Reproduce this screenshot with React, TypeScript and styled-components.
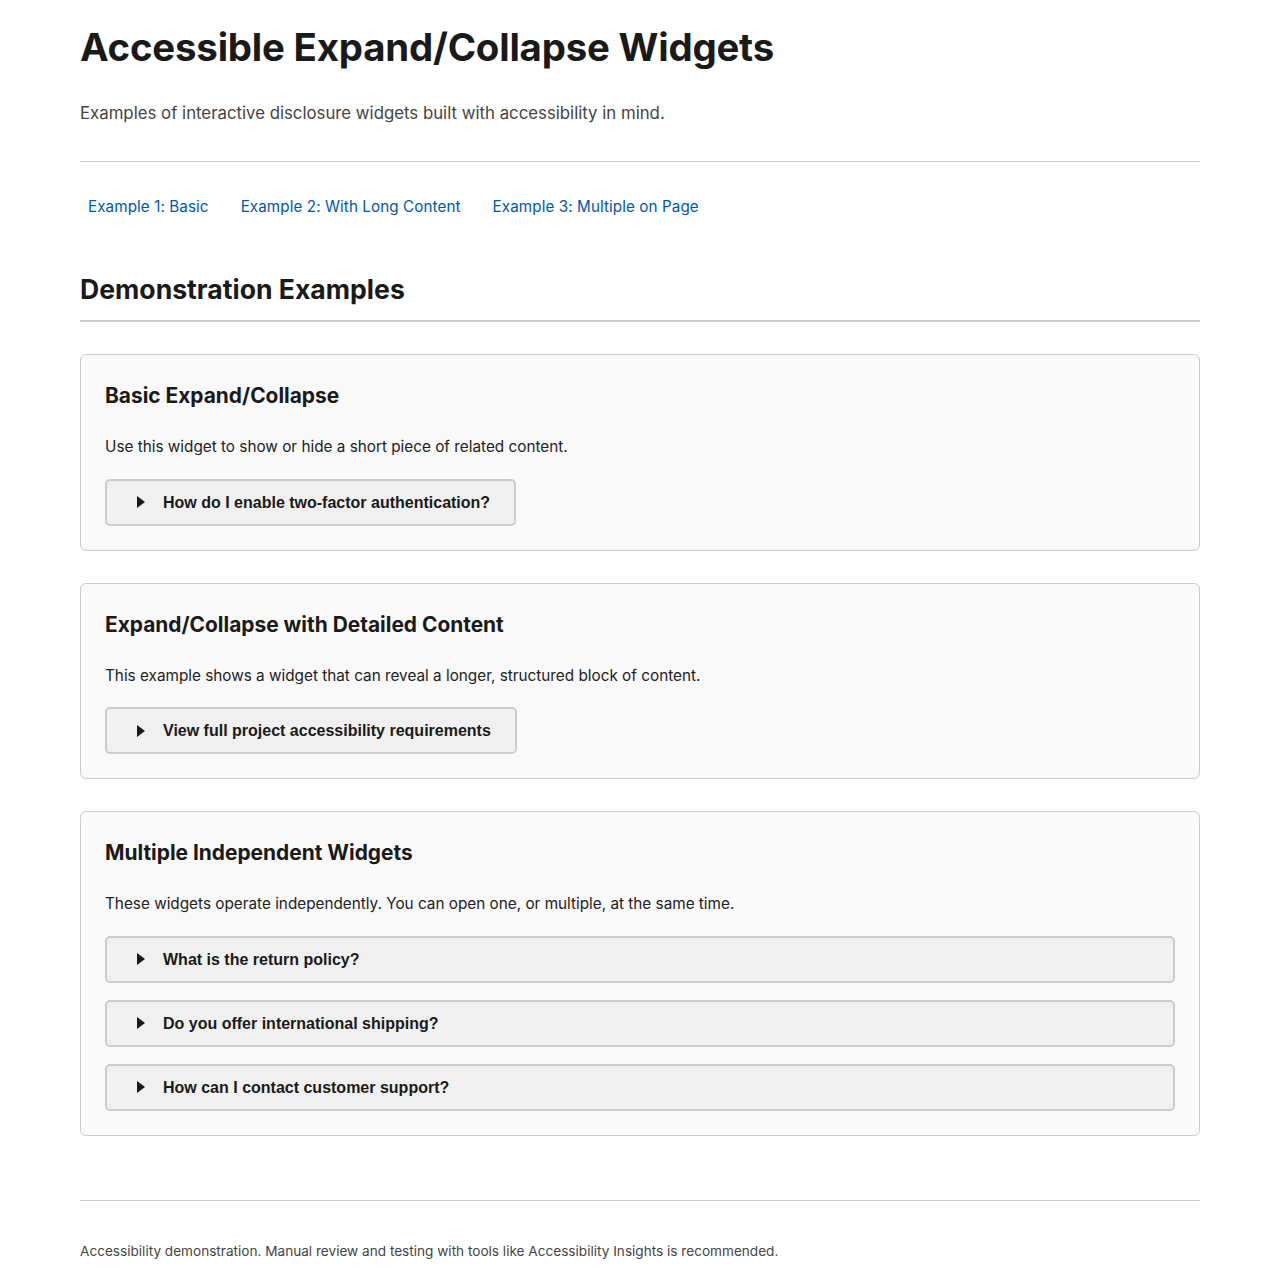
import React from "react";
import styled, { createGlobalStyle } from "styled-components";

const GlobalStyle = createGlobalStyle`
  body {
    margin: 0;
    background: #fff;
    color: #1a1a1a;
    font-family: Inter, "Noto Sans", "Liberation Sans", sans-serif;
  }
`;

const Page = styled.div`
  max-width: 1120px;
  margin: 0 auto;
  padding: 24px 0 16px;
`;

const Header = styled.header`
  padding-bottom: 35px;
  border-bottom: 1px solid #ccc;
`;

const Title = styled.h1`
  margin: 0;
  font-size: 38.4px;
  line-height: 1.2;
  font-weight: 700;
  letter-spacing: -0.2px;
  color: #1a1a1a;
`;

const Subtitle = styled.p`
  margin: 31px 0 0;
  font-size: 16.8px;
  line-height: 1.5;
  color: #444;
`;

const Nav = styled.nav`
  display: flex;
  gap: 16px;
  padding: 30px 0 0;
`;

const NavLink = styled.a`
  padding: 4px 8px;
  font-size: 15.2px;
  line-height: 1.5;
  letter-spacing: 0.1px;
  color: #0056b3;
  text-decoration: none;
`;

const SectionTitle = styled.h2`
  margin: 51px 0 32px;
  padding-bottom: 16px;
  border-bottom: 2px solid #ccc;
  font-size: 26.6px;
  line-height: 30px;
  font-weight: 700;
  color: #1a1a1a;
`;

const Card = styled.section`
  background: #f9f9f9;
  border: 1px solid #ccc;
  border-radius: 6px;
  padding: 24px;
  margin-bottom: 32px;
`;

const CardTitle = styled.h3`
  margin: 4px 0 0;
  font-size: 20.9px;
  line-height: 26px;
  font-weight: 700;
  color: #1a1a1a;
`;

const CardText = styled.p`
  margin: 27px 0 20px;
  font-size: 15.3px;
  line-height: 22.5px;
  color: #222;
`;

const Stack = styled.div`
  display: flex;
  flex-direction: column;
  gap: 17px;
`;

const Details = styled.details<{ $full?: boolean }>`
  display: ${(p) => (p.$full ? "block" : "inline-block")};
`;

const Summary = styled.summary`
  display: flex;
  align-items: center;
  gap: 18px;
  list-style: none;
  padding: 12px 24px 12px 30px;
  background: #f0f0f0;
  border: 2px solid #ccc;
  border-radius: 5px;
  font-family: "Liberation Sans", Arial, sans-serif;
  font-size: 16px;
  line-height: 19px;
  font-weight: 700;
  color: #1a1a1a;
  cursor: pointer;

  &::-webkit-details-marker {
    display: none;
  }
`;

const Caret = styled.span`
  width: 0;
  height: 0;
  border-top: 6px solid transparent;
  border-bottom: 6px solid transparent;
  border-left: 8px solid #1a1a1a;
`;

const Footer = styled.footer`
  margin-top: 64px;
  padding-top: 40px;
  border-top: 1px solid #ccc;
  font-size: 13.6px;
  line-height: 1.5;
  color: #444;
`;

const Disclosure: React.FC<{ label: string; full?: boolean }> = ({
  label,
  full,
}) => (
  <Details $full={full}>
    <Summary>
      <Caret aria-hidden="true" />
      {label}
    </Summary>
  </Details>
);

export default function App() {
  return (
    <>
      <GlobalStyle />
      <Page>
        <Header>
          <Title>Accessible Expand/Collapse Widgets</Title>
          <Subtitle>
            Examples of interactive disclosure widgets built with accessibility
            in mind.
          </Subtitle>
        </Header>
        <Nav>
          <NavLink href="#basic">Example 1: Basic</NavLink>
          <NavLink href="#long">Example 2: With Long Content</NavLink>
          <NavLink href="#multiple">Example 3: Multiple on Page</NavLink>
        </Nav>

        <SectionTitle>Demonstration Examples</SectionTitle>

        <Card id="basic">
          <CardTitle>Basic Expand/Collapse</CardTitle>
          <CardText>
            Use this widget to show or hide a short piece of related content.
          </CardText>
          <Disclosure label="How do I enable two-factor authentication?" />
        </Card>

        <Card id="long">
          <CardTitle>Expand/Collapse with Detailed Content</CardTitle>
          <CardText>
            This example shows a widget that can reveal a longer, structured
            block of content.
          </CardText>
          <Disclosure label="View full project accessibility requirements" />
        </Card>

        <Card id="multiple">
          <CardTitle>Multiple Independent Widgets</CardTitle>
          <CardText>
            These widgets operate independently. You can open one, or multiple,
            at the same time.
          </CardText>
          <Stack>
            <Disclosure full label="What is the return policy?" />
            <Disclosure full label="Do you offer international shipping?" />
            <Disclosure full label="How can I contact customer support?" />
          </Stack>
        </Card>

        <Footer>
          Accessibility demonstration. Manual review and testing with tools like
          Accessibility Insights is recommended.
        </Footer>
      </Page>
    </>
  );
}
